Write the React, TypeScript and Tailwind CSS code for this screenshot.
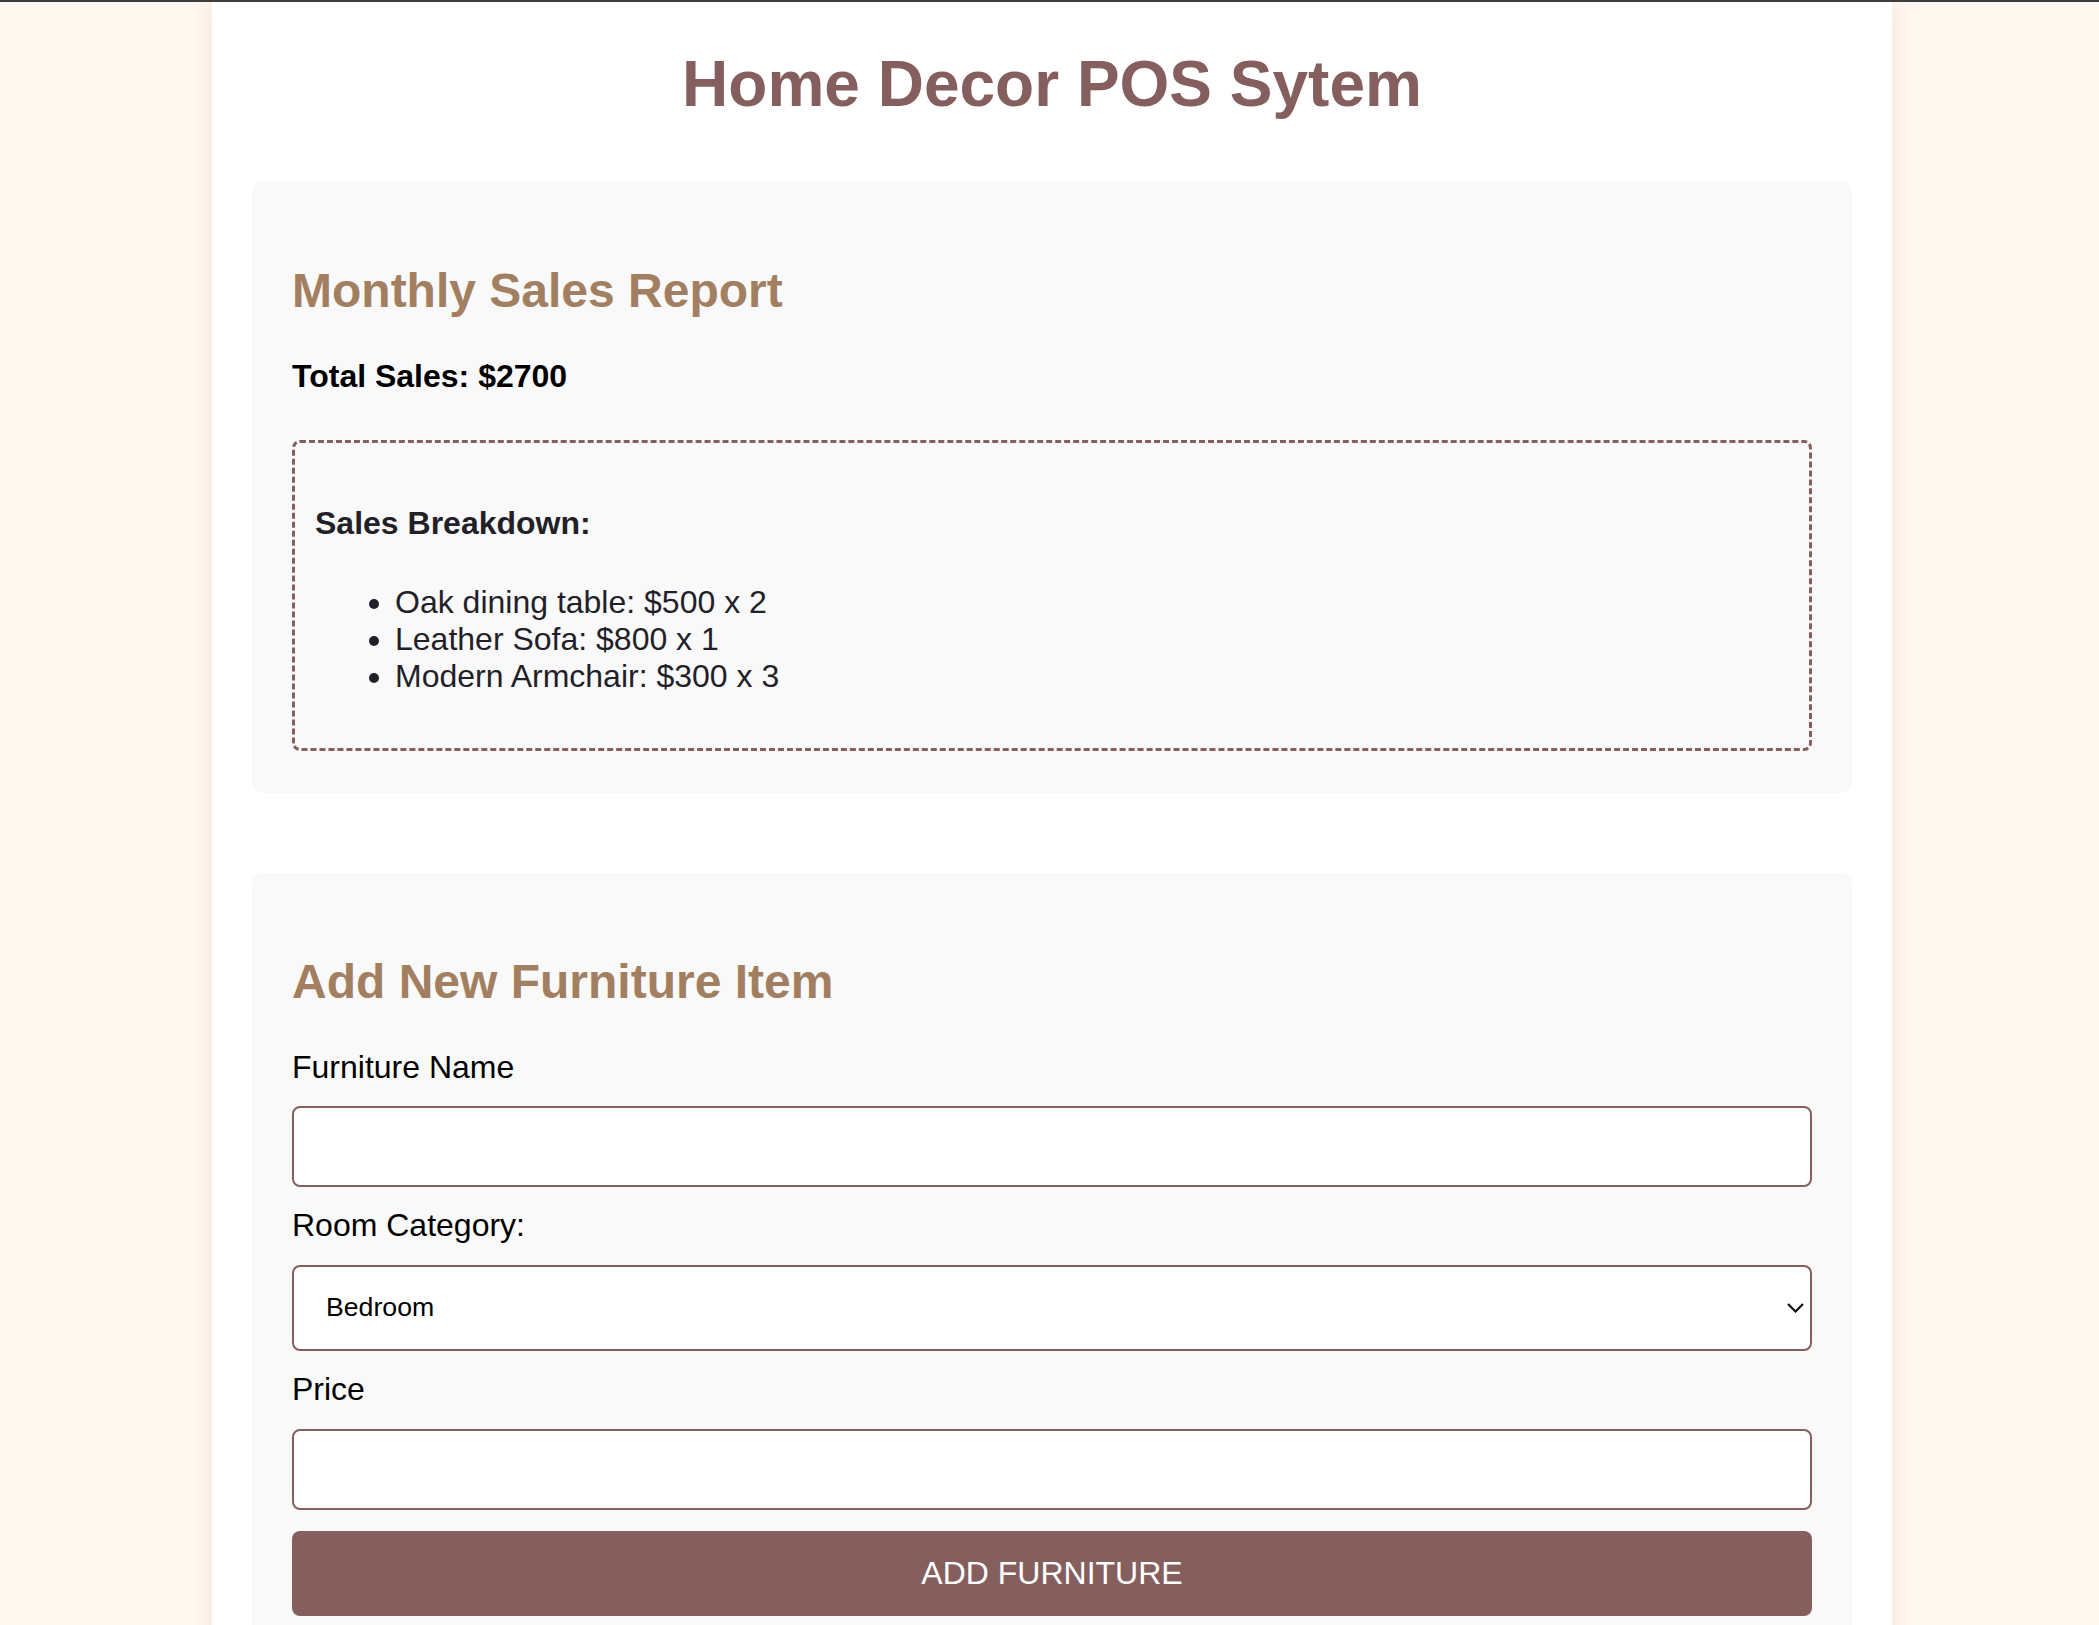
import React from "react";

const items = [
  { name: "Oak dining table", price: 500, qty: 2 },
  { name: "Leather Sofa", price: 800, qty: 1 },
  { name: "Modern Armchair", price: 300, qty: 3 },
];

export default function App() {
  const total = items.reduce((sum, i) => sum + i.price * i.qty, 0);

  return (
    <div className="min-h-screen border-t-2 border-[#3d3d3d] bg-[#fff7f0] font-['Liberation_Sans',Arial,sans-serif] leading-[1.15]">
      <div className="ml-[212px] min-h-[1623px] w-[1680px] bg-white px-10 pt-[46px] pb-10 shadow-[0_0_18px_rgba(120,90,60,0.12)]">
        <h1 className="text-center text-[64px] font-bold text-[#855e5e]">Home Decor POS Sytem</h1>

        <section className="mt-[60px] rounded-[10px] bg-[#f9f9f9] px-10 pt-10 pb-[42px]">
          <h2 className="mt-[41px] mb-10 text-[48px] font-bold text-[#a27f60]">Monthly Sales Report</h2>
          <p className="text-[32px] font-bold text-black">Total Sales: ${total}</p>

          <div className="mt-[45px] rounded-[8px] border-[3px] border-dashed border-[#855f5d] p-5 text-[#231f29]">
            <h4 className="mt-[42px] text-[32px] font-bold">Sales Breakdown:</h4>
            <ul className="mt-[43px] mb-[33px] list-disc pl-[80px] text-[32px]">
              {items.map((i) => (
                <li key={i.name}>
                  {i.name}: ${i.price} x {i.qty}
                </li>
              ))}
            </ul>
          </div>
        </section>

        <section className="mt-[80px] rounded-[10px] bg-[#f9f9f9] px-10 pt-10 pb-10">
          <h2 className="mt-[41px] mb-10 text-[48px] font-bold text-[#a27f60]">Add New Furniture Item</h2>

          <label className="mb-[20px] block text-[32px] text-black">Furniture Name</label>
          <input type="text" className="block h-[81px] w-full rounded-[8px] border-2 border-[#855f5d] bg-white px-5 text-[32px] outline-none" />

          <label className="mt-[20px] mb-[21px] block text-[32px] text-black">Room Category:</label>
          <div className="relative">
            <select className="block h-[86px] w-full appearance-none rounded-[8px] border-2 border-[#855f5d] bg-white pl-[32px] text-[26.67px] text-black outline-none">
              <option>Bedroom</option>
              <option>Living Room</option>
              <option>Dining Room</option>
              <option>Office</option>
            </select>
            <svg className="pointer-events-none absolute top-1/2 right-[8px] h-[10px] w-[17px] -translate-y-1/2" viewBox="0 0 17 10" fill="none" stroke="#111" strokeWidth="2.2">
              <polyline points="1,1 8.5,8.5 16,1" />
            </svg>
          </div>

          <label className="mt-[20px] mb-[22px] block text-[32px] text-black">Price</label>
          <input type="number" className="block h-[81px] w-full rounded-[8px] border-2 border-[#855f5d] bg-white px-5 text-[32px] outline-none" />

          <button className="mt-[21px] block h-[85px] w-full rounded-[8px] bg-[#855f5d] text-[32px] text-white">ADD FURNITURE</button>
        </section>
      </div>
    </div>
  );
}
